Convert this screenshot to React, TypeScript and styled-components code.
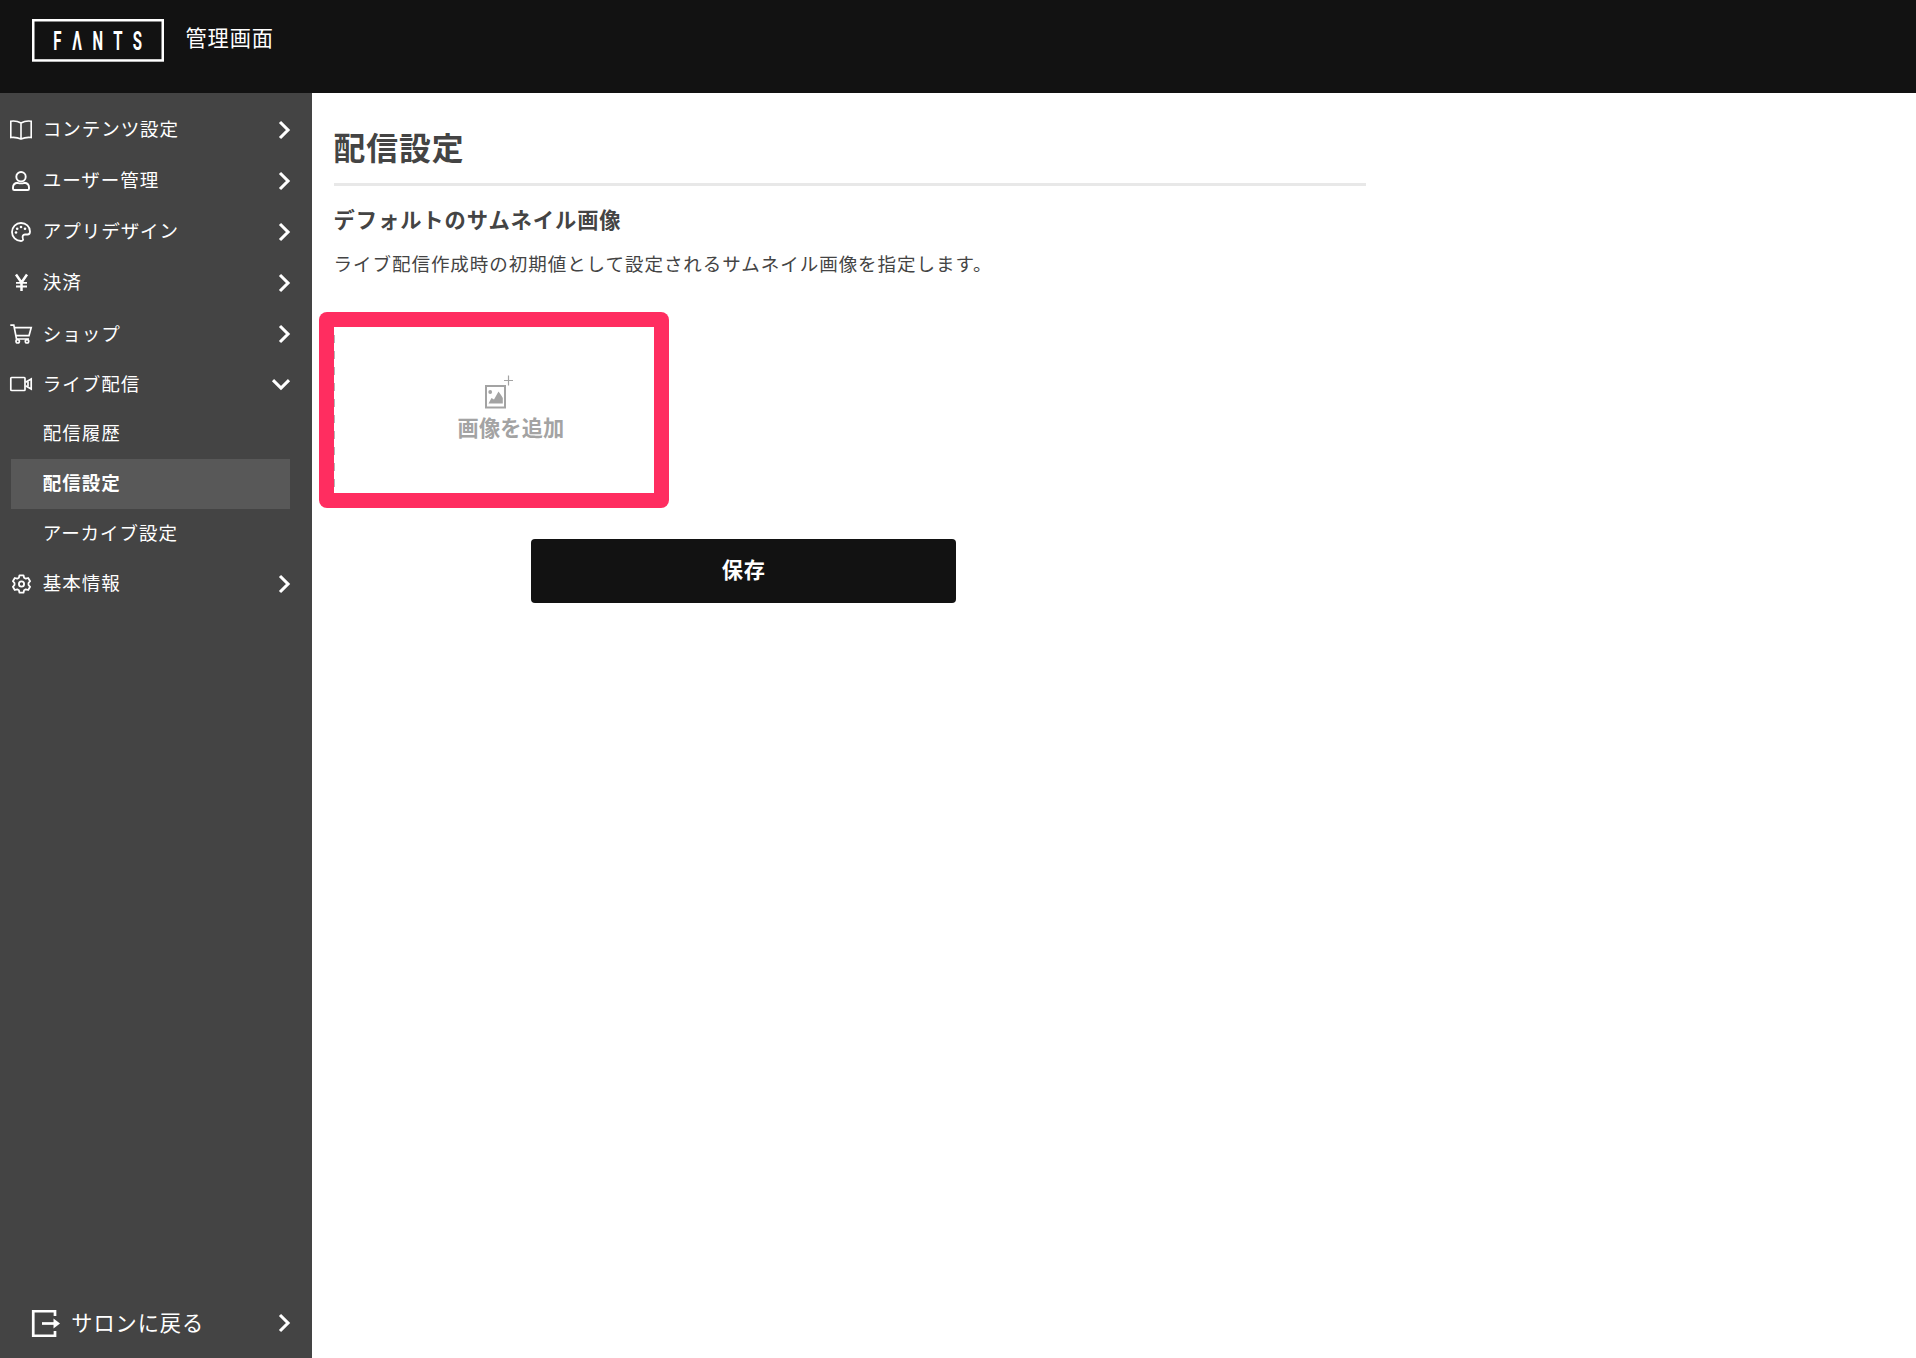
import React from 'react';
import styled, { createGlobalStyle } from 'styled-components';

const GlobalStyle = createGlobalStyle`
  *, *::before, *::after { box-sizing: border-box; }
  body {
    margin: 0;
    background: #fff;
    color: #444;
    font-family: "Noto Sans CJK JP", "Noto Sans", sans-serif;
    font-size: 18.55px;
    letter-spacing: 0.93px;
  }
  svg { display: block; flex: none; overflow: visible; }
`;

const Page = styled.div`
  display: grid;
  grid-template: 93.4px 1fr / 311.6px 1fr;
  height: 1358px;
  overflow: hidden;
`;

const Header = styled.header`
  grid-column: 1 / -1;
  display: flex;
  align-items: flex-start;
  gap: 21.500px;
  padding: 19px 32px 0;
  background: #121212;
  color: #fff;
`;

const HeaderTitle = styled.span`
  font-size: 21.2px;
  line-height: 36px;
`;

const Sidebar = styled.nav`
  display: flex;
  flex-direction: column;
  padding: 10.7px 21.6px 3.6px 10.5px;
  background: #444;
  color: #fff;
`;

const MenuRow = styled.a<{ $open?: boolean }>`
  display: grid;
  grid-template-columns: 21.6px 1fr 20px;
  align-items: center;
  column-gap: 10.7px;
  height: ${(p) => (p.$open ? 49.2 : 51.1)}px;
  line-height: 28px;
`;

const MenuLabel = styled.span`
  padding-bottom: 3px;
`;

const Center = styled.span`
  display: flex;
  justify-content: center;
`;

const Arrow = styled.span`
  display: flex;
  justify-content: flex-end;
`;

const SubRow = styled.a<{ $active?: boolean }>`
  height: 49.9px;
  padding-left: 32.3px;
  line-height: 46px;
  font-weight: ${(p) => (p.$active ? 700 : 400)};
  background: ${(p) => (p.$active ? '#585858' : 'transparent')};
`;

const BackRow = styled.a`
  display: flex;
  align-items: center;
  gap: 11.500px;
  height: 62px;
  margin-top: auto;
  padding: 0 0.500px 0 21.300px;
  font-size: 21.2px;
  line-height: 32px;
`;

const BackLabel = styled(MenuLabel)`
  flex: 1;
`;

const Main = styled.main`
  width: 1054.5px;
  padding: 29px 0 0 22px;
`;

const Title = styled.h1`
  margin: 0;
  padding-bottom: 12.8px;
  border-bottom: 3px solid #e8e8e8;
  font-size: 31.8px;
  font-weight: 700;
  line-height: 48px;
`;

const SectionTitle = styled.h2`
  margin: 17.2px 0 0;
  font-size: 21.25px;
  font-weight: 700;
  line-height: 32px;
`;

const Description = styled.p`
  margin: 14px 0 0;
  line-height: 28px;
`;

const UploadFrame = styled.div`
  width: 350px;
  height: 196px;
  margin: 34.6px 0 0 -14.6px;
  padding: 15px;
  border-radius: 8px;
  background: #ff2d60;
`;

const UploadBox = styled.button`
  display: flex;
  flex-direction: column;
  align-items: center;
  width: 320px;
  height: 166px;
  padding: 48px 0 0 34px;
  border: 0;
  background: repeating-linear-gradient(#fff 0 8px, #b5b5b5 8px 16px) 0 0 / 1px 100% no-repeat #fff;
  color: #a3a3a3;
  font: 700 21.2px/32px "Noto Sans CJK JP", sans-serif;
  letter-spacing: 0.2px;
`;

const UploadIcon = styled.span`
  display: flex;
  margin: 0 25px 2px 0;
`;

const SaveButton = styled.button`
  display: block;
  width: 425px;
  height: 64.5px;
  margin: 30.6px 0 0 197.2px;
  padding: 0 0 3px 1px;
  border: 0;
  border-radius: 4px;
  background: #121212;
  color: #fff;
  font: 700 21.2px/32px "Noto Sans CJK JP", sans-serif;
  letter-spacing: 0.93px;
`;

const Logo = () => (
  <svg width="132" height="43" viewBox="0 0 132 43">
    <rect x="1.25" y="1.25" width="129.5" height="40.2" fill="none" stroke="#fff" strokeWidth="2.5" />
    <g transform="translate(0 30.5) scale(.6 1)">
      <text
        x="35.500 67 101 135.500 168"
        y="0"
        fill="#fff"
        fontFamily="Roboto, sans-serif"
        fontSize="25"
        fontWeight="700"
        letterSpacing="0"
      >
        FΛNTS
      </text>
    </g>
  </svg>
);

const Chevron = ({ down = false }: { down?: boolean }) =>
  down ? (
    <svg width="18" height="11" viewBox="0 0 18 11" fill="none" stroke="#fff" strokeWidth="3.1">
      <path d="M1 1.2 9 9l8-7.8" />
    </svg>
  ) : (
    <svg width="11" height="18" viewBox="0 0 11 18" fill="none" stroke="#fff" strokeWidth="3.1">
      <path d="M1 1 9 9l-8 8" />
    </svg>
  );

const BookIcon = () => (
  <svg width="22" height="20" viewBox="0 0 22 20" fill="none" stroke="#fff" strokeWidth="1.6">
    <path d="M11 3Q6.5.4.8 1.2v16.3q5.700-.6 10.200 1.500 4.500-2.100 10.200-1.500V1.200Q15.500.4 11 3ZM11 3v16" />
  </svg>
);

const UserIcon = () => (
  <svg width="18" height="20" viewBox="0 0 18 20" fill="none" stroke="#fff" strokeWidth="1.9">
    <circle cx="9" cy="5.700" r="4.700" />
    <path d="M5.500 11.800C2.500 12.200 1 14 1 16.500v1.200q0 1.300 1.300 1.300h13.400q1.300 0 1.300-1.300v-1.200c0-2.500-1.500-4.300-4.500-4.700q-3.500 1.200-7 0Z" />
  </svg>
);

const PaletteIcon = () => (
  <svg width="20" height="20" viewBox="0 0 20 20" fill="none" stroke="#fff" strokeWidth="1.8">
    <path d="M19 9.500C19 4.700 15 1 10 1S1 5 1 10s4 9 9 9c1.700 0 2.500-1.100 1.900-2.500-.8-2-.1-4 2.100-4h2.500c1.500 0 2.500-1.200 2.500-3Z" />
    <g fill="#fff" stroke="none">
      <circle cx="5" cy="10.500" r="1.300" />
      <circle cx="6.200" cy="6.800" r="1.300" />
      <circle cx="10" cy="5" r="1.300" />
      <circle cx="14" cy="6.800" r="1.300" />
    </g>
  </svg>
);

const YenIcon = () => (
  <svg width="13" height="17" viewBox="0 0 13 17" fill="none" stroke="#fff" strokeWidth="2.5">
    <path d="m1 .5 5.500 8 5.500-8M6.500 8.500V17" />
    <path d="M1 8.800h11M1 12.500h11" strokeWidth="1.800" />
  </svg>
);

const CartIcon = () => (
  <svg width="22" height="20" viewBox="0 0 22 20" fill="none" stroke="#fff" strokeWidth="1.700">
    <path d="M.3 1.200h3.500L6.500 15H19M4.200 3.700h17L19 11.700H6" />
    <circle cx="7.700" cy="17.300" r="1.700" />
    <circle cx="17" cy="17.300" r="1.700" />
  </svg>
);

const VideoIcon = () => (
  <svg width="22" height="16" viewBox="0 0 22 16" fill="none" stroke="#fff" strokeWidth="1.700">
    <rect x=".8" y="1.500" width="14.200" height="13" rx=".8" />
    <path d="M15.500 6.300 21.200 3v10l-5.700-3.300" />
    <path d="M18 5.500v5" />
  </svg>
);

const GearIcon = () => (
  <svg width="19" height="20" viewBox="0 0 19 20" fill="none" stroke="#fff" strokeWidth="1.800" strokeLinejoin="round">
    <path d="M7.500 1.300h4l.6 2.400 1.700 1 2.400-.7 1.900 3.200L16.500 9v2l1.600 1.800-1.900 3.200-2.400-.7-1.700 1-.6 2.400h-4l-.6-2.400-1.700-1-2.400.7-1.900-3.200L2.500 11V9L.9 7.200 2.800 4l2.400.7 1.700-1Z" />
    <circle cx="9.500" cy="10" r="2.600" />
  </svg>
);

const ExitIcon = () => (
  <svg width="28" height="27" viewBox="0 0 28 27" fill="none" stroke="#fff" strokeWidth="2.700">
    <path d="M23 6V1.250H1.250v24.500H23V21" />
    <path d="M10 13.500h13" />
    <path d="m21.500 8.500 6.500 5-6.500 5Z" fill="#fff" stroke="none" />
  </svg>
);

const AddImageIcon = () => (
  <svg width="28" height="34" viewBox="0 0 28 34" fill="#a3a3a3">
    <rect x="1" y="11" width="19" height="21.500" fill="none" stroke="#a3a3a3" strokeWidth="2" />
    <circle cx="5.200" cy="17" r="1.900" />
    <path d="M3.500 28.500 6.500 23l2.500 1.500 4.500-8 2.500 3.500 1.800 3v5.500Z" />
    <path d="M23.500.500v10M19 5.500h9" stroke="#a3a3a3" strokeWidth="1.200" />
  </svg>
);

interface Item {
  label: string;
  Icon: () => React.JSX.Element;
  children?: { label: string; active?: boolean }[];
}

const items: Item[] = [
  { label: 'コンテンツ設定', Icon: BookIcon },
  { label: 'ユーザー管理', Icon: UserIcon },
  { label: 'アプリデザイン', Icon: PaletteIcon },
  { label: '決済', Icon: YenIcon },
  { label: 'ショップ', Icon: CartIcon },
  {
    label: 'ライブ配信',
    Icon: VideoIcon,
    children: [{ label: '配信履歴' }, { label: '配信設定', active: true }, { label: 'アーカイブ設定' }],
  },
  { label: '基本情報', Icon: GearIcon },
];

export default function App() {
  return (
    <>
      <GlobalStyle />
      <Page>
        <Header>
          <Logo />
          <HeaderTitle>管理画面</HeaderTitle>
        </Header>
        <Sidebar>
          {items.map(({ label, Icon, children }) => (
            <React.Fragment key={label}>
              <MenuRow $open={!!children}>
                <Center>
                  <Icon />
                </Center>
                <MenuLabel>{label}</MenuLabel>
                <Arrow>
                  <Chevron down={!!children} />
                </Arrow>
              </MenuRow>
              {children?.map((c) => (
                <SubRow key={c.label} $active={c.active}>
                  {c.label}
                </SubRow>
              ))}
            </React.Fragment>
          ))}
          <BackRow>
            <ExitIcon />
            <BackLabel>サロンに戻る</BackLabel>
            <Chevron />
          </BackRow>
        </Sidebar>
        <Main>
          <Title>配信設定</Title>
          <SectionTitle>デフォルトのサムネイル画像</SectionTitle>
          <Description>ライブ配信作成時の初期値として設定されるサムネイル画像を指定します。</Description>
          <UploadFrame>
            <UploadBox>
              <UploadIcon>
                <AddImageIcon />
              </UploadIcon>
              画像を追加
            </UploadBox>
          </UploadFrame>
          <SaveButton>保存</SaveButton>
        </Main>
      </Page>
    </>
  );
}
